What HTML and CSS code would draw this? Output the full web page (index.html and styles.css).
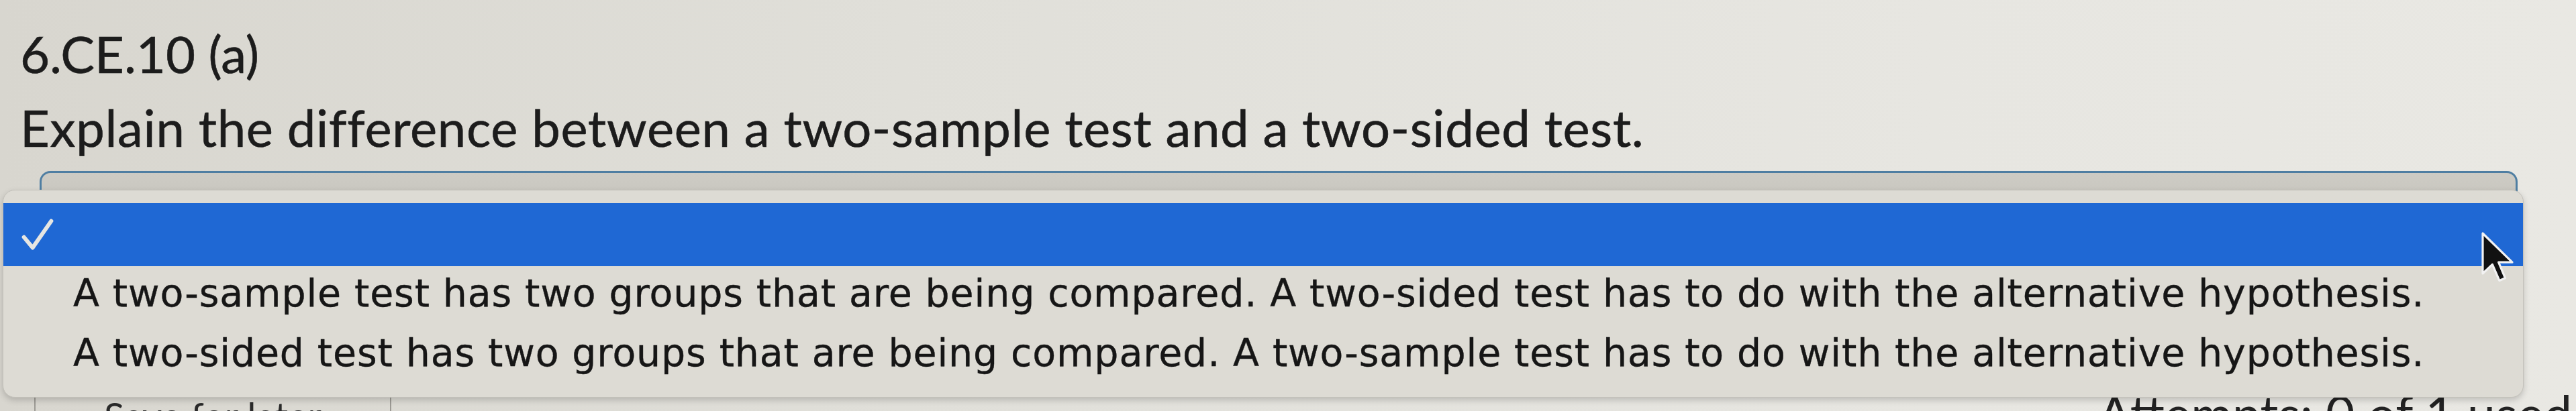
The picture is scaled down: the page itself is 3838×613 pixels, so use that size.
FILE: index.html
```html
<!DOCTYPE html>
<html lang="en">
<head>
<meta charset="utf-8">
<title>6.CE.10 (a)</title>
<link rel="stylesheet" href="styles.css">
</head>
<body>
<main class="page">
  <h1 class="qid">6.CE.10 (a)</h1>
  <p class="prompt">Explain the difference between a two-sample test and a two-sided test.</p>
  <div class="field">
    <div class="select-box"></div>
    <div class="menu" role="listbox">
      <div class="opt opt-selected" role="option">
        <svg class="check" viewBox="0 0 54 54" width="50" height="50" aria-hidden="true">
          <path d="M5 31 L19 48 L49 5" fill="none" stroke="#e6e6e2" stroke-width="6.5" stroke-linecap="round" stroke-linejoin="round"/>
        </svg>
      </div>
      <div class="opt" role="option">A two-sample test has two groups that are being compared. A two-sided test has to do with the alternative hypothesis.</div>
      <div class="opt" role="option">A two-sided test has two groups that are being compared. A two-sample test has to do with the alternative hypothesis.</div>
      <svg class="cursor" viewBox="-1 -1 13 20" width="52" height="80" aria-hidden="true">
        <path d="M0 0 L0 15 L3.6 11.6 L6.2 17.6 L8.4 16.7 L5.9 10.8 L11 10.8 Z" fill="#111" stroke="#f2f2f2" stroke-width="0.8" stroke-linejoin="round"/>
      </svg>
    </div>
  </div>
  <footer class="footer">
    <button class="btn" type="button">Save for later</button>
    <span class="attempts">Attempts: 0 of 1 used</span>
  </footer>
</main>
</body>
</html>
```

FILE: styles.css
```css
html, body {
  margin: 0;
  padding: 0;
  height: 613px;
  overflow: hidden;
}

body {
  background: linear-gradient(90deg, #d8d6cf 0%, #e0dfd9 35%, #e7e6e1 75%, #e9e8e3 100%);
  font-family: Lato, "Noto Sans", sans-serif;
  color: #1e1e1e;
}

.page {
  display: flex;
  flex-direction: column;
  padding-top: 25px;
}

.qid,
.prompt {
  margin: 0;
  padding-left: 30px;
  font-family: Lato, sans-serif;
  font-weight: 400;
  font-size: 76px;
  line-height: 110px;
  color: #1c1c1c;
  -webkit-text-stroke: 0.6px #1c1c1c;
}

.qid {
  letter-spacing: 0;
}

.prompt {
  letter-spacing: 0.7px;
}

.field {
  position: relative;
  margin-top: 10px;
}

.select-box {
  margin-left: 59px;
  width: 3692px;
  height: 66px;
  box-sizing: border-box;
  border: 3px solid #4f7ea2;
  border-radius: 16px;
  background: linear-gradient(180deg, #cdcbc4 0%, #c6c4bd 100%);
}

.menu {
  position: absolute;
  left: 4px;
  top: 28px;
  width: 3756px;
  box-sizing: border-box;
  padding: 19px 0 17px;
  background: #dddbd4;
  border: 1px solid #c3c1ba;
  border-radius: 18px;
  box-shadow: 0 4px 10px rgba(0, 0, 0, 0.18);
  font-family: "DejaVu Sans", Verdana, sans-serif;
  font-size: 57px;
  color: #161616;
}

.opt {
  height: 89px;
  line-height: 81px;
  padding-left: 104px;
  white-space: nowrap;
  letter-spacing: 0.85px;
  -webkit-text-stroke: 0.4px #161616;
}

.opt-selected {
  height: 94px;
  background: #1f68d4;
  padding-left: 26px;
  display: flex;
  align-items: center;
}

.check {
  display: block;
}

.cursor {
  position: absolute;
  left: 3690px;
  top: 60px;
}

.footer {
  display: flex;
  justify-content: space-between;
  align-items: flex-start;
  margin-top: 260px;
}

.btn {
  margin: 9px 0 0 51px;
  width: 532px;
  height: 80px;
  padding: 0;
  border: 2px solid #9c9a94;
  border-bottom: none;
  background: transparent;
  font-family: Lato, sans-serif;
  font-size: 56px;
  line-height: 56px;
  color: #2a2a2a;
  display: flex;
  justify-content: center;
  align-items: flex-start;
}

.attempts {
  margin-right: 6px;
  font-family: Lato, sans-serif;
  font-size: 75px;
  line-height: 70px;
  color: #222;
}
```
